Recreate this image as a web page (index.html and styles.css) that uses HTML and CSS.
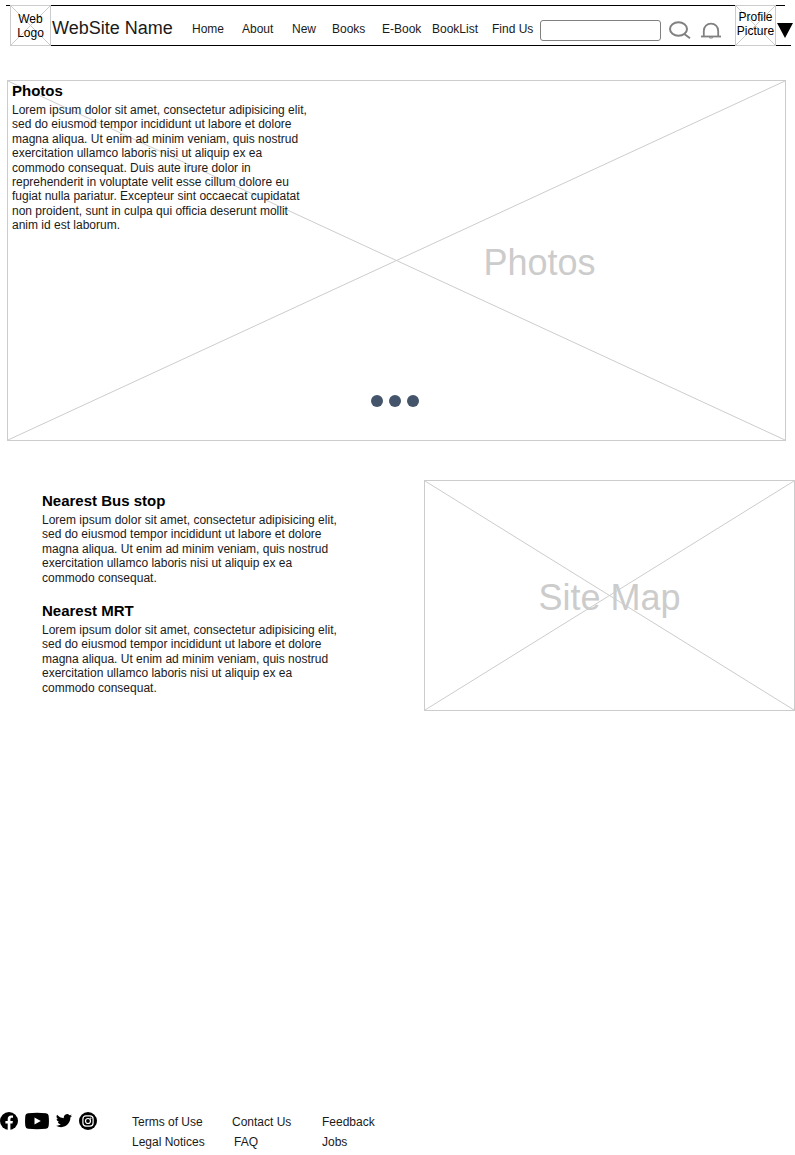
FILE: index.html
```html
<!DOCTYPE html>
<html lang="en">
<head>
<meta charset="utf-8">
<meta name="viewport" content="width=device-width, initial-scale=1">
<title>WebSite Name</title>
<link rel="stylesheet" href="styles.css">
</head>
<body class="page">
  <header class="header">
    <a class="frame tile" href="#">
      <svg class="cross" viewBox="0 0 100 100" preserveAspectRatio="none" aria-hidden="true"><path d="M0 0L100 100M100 0L0 100"/></svg>
      <span class="tile-text">Web Logo</span>
    </a>
    <a class="brand" href="#">WebSite Name</a>
    <nav class="nav">
      <a href="#">Home</a>
      <a href="#">About</a>
      <a href="#">New</a>
      <a href="#">Books</a>
      <a href="#">E-Book</a>
      <a href="#">BookList</a>
      <a href="#">Find Us</a>
    </nav>
    <input class="search" type="search" aria-label="Search">
    <button class="icon-button" type="button" aria-label="Search">
      <svg width="22" height="18" viewBox="0 0 22 18" fill="none" stroke="#808080" stroke-width="2"><ellipse cx="9.5" cy="8" rx="8.5" ry="6.8"/><path d="M15.3 13L21 17.2"/></svg>
    </button>
    <button class="icon-button bell" type="button" aria-label="Notifications">
      <svg width="20" height="18" viewBox="0 0 20 18" fill="none" stroke="#808080"><path stroke-width="1.8" d="M2.8 15V10C2.8 5.5 6 2.7 10 2.7S17.2 5.5 17.2 10V15"/><path stroke-width="1.8" d="M0 15.5H20"/><path stroke-width="1" d="M8 16.6Q10 17.6 12 16.6"/></svg>
    </button>
    <a class="frame tile profile" href="#">
      <svg class="cross" viewBox="0 0 100 100" preserveAspectRatio="none" aria-hidden="true"><path d="M0 0L100 100M100 0L0 100"/></svg>
      <span class="tile-text">Profile Picture</span>
    </a>
    <button class="icon-button" type="button" aria-label="Profile menu">
      <svg width="18" height="16" viewBox="0 0 18 16"><path d="M1 1H17L9 16Z"/></svg>
    </button>
  </header>

  <main class="main">
    <section class="frame hero">
      <svg class="cross" viewBox="0 0 100 100" preserveAspectRatio="none" aria-hidden="true"><path d="M0 0L100 100M100 0L0 100"/></svg>
      <div class="copy">
        <h2>Photos</h2>
        <p>Lorem ipsum dolor sit amet, consectetur adipisicing elit, sed do eiusmod tempor incididunt ut labore et dolore magna aliqua. Ut enim ad minim veniam, quis nostrud exercitation ullamco laboris nisi ut aliquip ex ea commodo consequat. Duis aute irure dolor in reprehenderit in voluptate velit esse cillum dolore eu fugiat nulla pariatur. Excepteur sint occaecat cupidatat non proident, sunt in culpa qui officia deserunt mollit anim id est laborum.</p>
      </div>
      <div class="label hero-label">Photos</div>
      <div class="dots">
        <button class="dot" type="button" aria-label="Photo 1"></button>
        <button class="dot" type="button" aria-label="Photo 2"></button>
        <button class="dot" type="button" aria-label="Photo 3"></button>
      </div>
    </section>

    <section class="location">
      <div class="directions">
        <article class="copy">
          <h2>Nearest Bus stop</h2>
          <p>Lorem ipsum dolor sit amet, consectetur adipisicing elit, sed do eiusmod tempor incididunt ut labore et dolore magna aliqua. Ut enim ad minim veniam, quis nostrud exercitation ullamco laboris nisi ut aliquip ex ea commodo consequat.</p>
        </article>
        <article class="copy">
          <h2>Nearest MRT</h2>
          <p>Lorem ipsum dolor sit amet, consectetur adipisicing elit, sed do eiusmod tempor incididunt ut labore et dolore magna aliqua. Ut enim ad minim veniam, quis nostrud exercitation ullamco laboris nisi ut aliquip ex ea commodo consequat.</p>
        </article>
      </div>
      <div class="frame map">
        <svg class="cross" viewBox="0 0 100 100" preserveAspectRatio="none" aria-hidden="true"><path d="M0 0L100 100M100 0L0 100"/></svg>
        <div class="label">Site Map</div>
      </div>
    </section>
  </main>

  <footer class="footer">
    <div class="social">
      <a href="#" aria-label="Facebook">
        <svg width="18" height="18" viewBox="0 0 18 18"><circle cx="9" cy="9" r="9"/><path fill="#fff" d="M7.7 18V11.5H5.4V8.9H7.7V7C7.7 4.7 9 3.4 11.1 3.4C12 3.4 13 3.6 13 3.6V5.8H11.9C10.8 5.8 10.4 6.5 10.4 7.2V8.9H12.9L12.5 11.5H10.4V18Z"/></svg>
      </a>
      <a href="#" aria-label="YouTube">
        <svg width="24" height="18" viewBox="0 0 24 18"><path d="M3 1.2Q12 .4 21 1.2Q23.3 1.4 23.6 3.6Q24.3 9 23.6 14.2Q23.3 16.5 21 16.8Q12 17.6 3 16.8Q.7 16.5 .4 14.2Q-.3 9 .4 3.6Q.7 1.4 3 1.2Z"/><path fill="#fff" d="M9.5 5.6L15.8 9L9.5 12.4Z"/></svg>
      </a>
      <a href="#" aria-label="Twitter">
        <svg width="16" height="18" viewBox="0 0 24 27"><path transform="translate(0 1)" d="M23.95 4.57a10 10 0 0 1-2.82.77 4.96 4.96 0 0 0 2.16-2.72c-.95.55-2 .96-3.13 1.18a4.92 4.92 0 0 0-8.38 4.48C7.69 8.1 4.07 6.13 1.64 3.16a4.93 4.93 0 0 0 1.52 6.57 4.9 4.9 0 0 1-2.23-.61v.06c0 2.38 1.7 4.37 3.95 4.82a5 5 0 0 1-2.22.08 4.93 4.93 0 0 0 4.6 3.42A9.87 9.87 0 0 1 0 19.54a13.94 13.94 0 0 0 7.55 2.21c9.05 0 14-7.5 14-13.98 0-.21 0-.42-.02-.63a9.94 9.94 0 0 0 2.42-2.57z"/></svg>
      </a>
      <a href="#" aria-label="Instagram">
        <svg width="18" height="18" viewBox="0 0 18 18"><circle cx="9" cy="9" r="9"/><g fill="none" stroke="#fff" stroke-width="1.2"><rect x="3.9" y="3.9" width="10.2" height="10.2" rx="3"/><circle cx="9" cy="9" r="2.5"/></g><circle cx="11.8" cy="6.2" r=".7" fill="#fff"/></svg>
      </a>
    </div>
    <nav class="links" aria-label="Footer">
      <a href="#">Terms of Use</a>
      <a href="#">Contact Us</a>
      <a href="#">Feedback</a>
      <a href="#">Legal Notices</a>
      <a class="faq" href="#">FAQ</a>
      <a href="#">Jobs</a>
    </nav>
  </footer>
</body>
</html>
```

FILE: styles.css
```css
* {
  box-sizing: border-box;
}

.page {
  display: flex;
  flex-direction: column;
  min-height: 100vh;
  margin: 0;
  background: #fff;
  color: #000;
  font-family: "Liberation Sans", Arial, Helvetica, sans-serif;
  font-size: 12px;
  line-height: 1.2;
}

a {
  color: inherit;
  text-decoration: none;
}

svg {
  display: block;
}

/* Placeholder box with crossing diagonals */
.frame {
  position: relative;
  border: 1px solid #ccc;
  background: #fff;
}

.cross {
  position: absolute;
  inset: 0;
  width: 100%;
  height: 100%;
  fill: none;
  stroke: #ccc;
}

.cross path {
  vector-effect: non-scaling-stroke;
}

.label {
  position: relative;
  padding-top: 4px;
  color: #ccc;
  font-size: 36px;
}

/* Header */
.header {
  display: flex;
  align-items: center;
  height: 41px;
  margin-top: 5px;
  padding: 0 1px 0 10px;
  background:
    linear-gradient(#000, #000) 6px 0 / calc(100% - 16px) 1px no-repeat,
    linear-gradient(#000, #000) 10px 100% / calc(100% - 14px) 1px no-repeat;
}

.tile {
  display: flex;
  flex: none;
  align-items: center;
  justify-content: center;
  width: 41px;
  height: 41px;
  line-height: 14px;
  text-align: center;
}

.tile-text {
  position: relative;
  width: min-content;
}

.profile {
  align-items: flex-start;
  padding-top: 4px;
}

.brand {
  flex: none;
  width: 140px;
  padding: 6px 0 0 1px;
  color: #1a1a1a;
  font-size: 18px;
  white-space: nowrap;
}

.nav {
  display: grid;
  flex: 1;
  grid-template-columns: 50fr 50fr 40fr 50fr 50fr 60fr 48fr;
  margin-left: 1px;
  padding-top: 8px;
  color: #1a1a1a;
  white-space: nowrap;
}

.search {
  flex: none;
  width: 121px;
  height: 21px;
  margin: 9px 8px 0 0;
  padding: 0 4px;
  border: 1px solid #808080;
  border-radius: 3px;
  background: #fff;
  font: inherit;
  appearance: none;
}

.icon-button {
  flex: none;
  margin: 9px 0 0;
  padding: 0;
  border: 0;
  background: none;
}

.bell {
  margin-right: 14px;
  margin-left: 10px;
}

/* Main content */
.main {
  display: flex;
  flex-direction: column;
  gap: 39px;
  padding-top: 34px;
}

.hero {
  display: flex;
  min-height: 361px;
  margin: 0 9px 0 7px;
  padding: 1px 0 0 4px;
}

.copy {
  position: relative;
  width: 298px;
}

.copy h2 {
  margin: 0 0 3px;
  font-size: 15px;
  line-height: 18px;
}

.copy p {
  margin: 0;
  color: #1a1a1a;
}

.hero-label {
  flex: 1;
  align-self: center;
  padding-right: 16px;
  text-align: center;
}

.dots {
  position: absolute;
  right: 3px;
  bottom: 33px;
  left: 0;
  display: flex;
  gap: 6px;
  justify-content: center;
}

.dot {
  width: 12px;
  height: 12px;
  padding: 0;
  border: 0;
  border-radius: 50%;
  background: #44546a;
}

.location {
  display: grid;
  grid-template-columns: 8fr 7fr;
}

.directions {
  display: flex;
  flex-direction: column;
  gap: 17px;
  padding: 12px 0 0 42px;
}

.map {
  display: flex;
  align-items: center;
  justify-content: center;
  min-height: 231px;
}

/* Footer */
.footer {
  display: flex;
  margin-top: auto;
  padding-bottom: 3px;
  color: #1a1a1a;
}

.social {
  display: flex;
  gap: 7px;
  width: 132px;
  fill: #000;
}

.links {
  display: grid;
  grid-template-columns: 100px 90px 90px;
  line-height: 20px;
}

.faq {
  padding-left: 2px;
}
```
